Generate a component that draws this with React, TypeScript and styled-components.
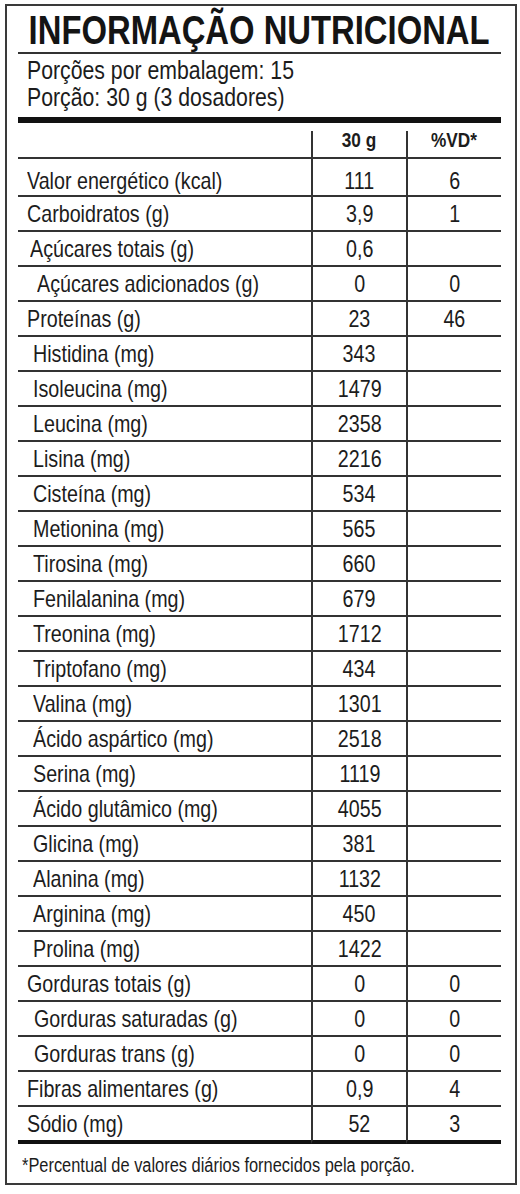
import styled, { createGlobalStyle } from 'styled-components';

const Global = createGlobalStyle`
  html, body { margin: 0; padding: 0; background: #fff; }
  body { font-family: "Liberation Sans", Arial, sans-serif; color: #1c1c1c; }
`;

type Row = { label: string; qty: string; vd?: string; indent?: number };

const rows: Row[] = [
  { label: 'Valor energético (kcal)', qty: '111', vd: '6' },
  { label: 'Carboidratos (g)', qty: '3,9', vd: '1' },
  { label: 'Açúcares totais (g)', qty: '0,6', indent: 3 },
  { label: 'Açúcares adicionados (g)', qty: '0', vd: '0', indent: 10 },
  { label: 'Proteínas (g)', qty: '23', vd: '46' },
  { label: 'Histidina (mg)', qty: '343', indent: 6 },
  { label: 'Isoleucina (mg)', qty: '1479', indent: 6 },
  { label: 'Leucina (mg)', qty: '2358', indent: 6 },
  { label: 'Lisina (mg)', qty: '2216', indent: 6 },
  { label: 'Cisteína (mg)', qty: '534', indent: 6 },
  { label: 'Metionina (mg)', qty: '565', indent: 6 },
  { label: 'Tirosina (mg)', qty: '660', indent: 6 },
  { label: 'Fenilalanina (mg)', qty: '679', indent: 6 },
  { label: 'Treonina (mg)', qty: '1712', indent: 6 },
  { label: 'Triptofano (mg)', qty: '434', indent: 6 },
  { label: 'Valina (mg)', qty: '1301', indent: 6 },
  { label: 'Ácido aspártico (mg)', qty: '2518', indent: 6 },
  { label: 'Serina (mg)', qty: '1119', indent: 6 },
  { label: 'Ácido glutâmico (mg)', qty: '4055', indent: 6 },
  { label: 'Glicina (mg)', qty: '381', indent: 6 },
  { label: 'Alanina (mg)', qty: '1132', indent: 6 },
  { label: 'Arginina (mg)', qty: '450', indent: 6 },
  { label: 'Prolina (mg)', qty: '1422', indent: 6 },
  { label: 'Gorduras totais (g)', qty: '0', vd: '0' },
  { label: 'Gorduras saturadas (g)', qty: '0', vd: '0', indent: 7 },
  { label: 'Gorduras trans (g)', qty: '0', vd: '0', indent: 7 },
  { label: 'Fibras alimentares (g)', qty: '0,9', vd: '4' },
  { label: 'Sódio (mg)', qty: '52', vd: '3' },
];

// texto condensado (tipo Arial Narrow) – sem fonte narrow instalada
const Narrow = styled.span<{ $origin?: 'left' | 'center'; $scale?: number }>`
  display: inline-block;
  white-space: nowrap;
  transform: scaleX(${(p) => p.$scale ?? 0.82});
  transform-origin: ${(p) => p.$origin ?? 'left'} center;
`;

// moldura externa
const Frame = styled.div`
  width: 512px;
  box-sizing: border-box;
  margin: 4px 0 0 5px;
  border: 2px solid #3a3a3a;
  padding: 0 14px 0 11px;
`;

const Title = styled.h1`
  display: flex;
  justify-content: center;
  margin: 0;
  padding-top: 2px;
  font-size: 40px;
  line-height: 44px;
  font-weight: 700;
  white-space: nowrap;
  color: #141414;
  border-bottom: 2px solid #333;
`;

const Serving = styled.div`
  display: flex;
  flex-direction: column;
  padding: 3px 0 6px 9px;
  font-size: 25px;
  border-bottom: 6px solid #111;
`;

const Line = styled.div`
  height: 27px;
  line-height: 27px;
  white-space: nowrap;
`;

const Table = styled.div`
  display: grid;
  grid-template-columns: 1fr 95px 95px;
  margin-top: 8px;
`;

const HeadCell = styled.div<{ $col?: boolean }>`
  height: 26px;
  font-size: 21px;
  line-height: 18px;
  font-weight: 700;
  text-align: center;
  border-bottom: 2px solid #333;
  border-left: ${(p) => (p.$col ? '2px solid #333' : 'none')};
`;

const Cell = styled.div<{ $first?: boolean; $last?: boolean; $col?: boolean; $indent?: number }>`
  box-sizing: border-box;
  height: ${(p) => (p.$first ? 38 : p.$last ? 37 : 35)}px;
  padding-top: ${(p) => (p.$first ? 7 : 2)}px;
  padding-left: ${(p) => (p.$col ? 0 : 9 + (p.$indent ?? 0))}px;
  font-size: 24px;
  line-height: 30px;
  text-align: ${(p) => (p.$col ? 'center' : 'left')};
  white-space: nowrap;
  border-bottom: ${(p) => (p.$last ? '4px solid #111' : '2px solid #333')};
  border-left: ${(p) => (p.$col ? '2px solid #333' : 'none')};
`;

const Footnote = styled.div`
  padding: 9px 0 6px 4px;
  font-size: 20px;
  line-height: 24px;
`;

export default function App() {
  return (
    <>
      <Global />
      <Frame>
        <Title>
          <Narrow $origin="center">INFORMAÇÃO NUTRICIONAL</Narrow>
        </Title>
        <Serving>
          <Line><Narrow $scale={0.85}>Porções por embalagem: 15</Narrow></Line>
          <Line><Narrow $scale={0.85}>Porção: 30 g (3 dosadores)</Narrow></Line>
        </Serving>
        <Table>
          <HeadCell />
          <HeadCell $col><Narrow $origin="center">30 g</Narrow></HeadCell>
          <HeadCell $col><Narrow $origin="center">%VD*</Narrow></HeadCell>
          {rows.map((r, i) => {
            const first = i === 0;
            const last = i === rows.length - 1;
            return [
              <Cell key={`l${i}`} $first={first} $last={last} $indent={r.indent}>
                <Narrow>{r.label}</Narrow>
              </Cell>,
              <Cell key={`q${i}`} $first={first} $last={last} $col>
                <Narrow $origin="center">{r.qty}</Narrow>
              </Cell>,
              <Cell key={`v${i}`} $first={first} $last={last} $col>
                <Narrow $origin="center">{r.vd ?? ''}</Narrow>
              </Cell>,
            ];
          })}
        </Table>
        <Footnote>
          <Narrow>*Percentual de valores diários fornecidos pela porção.</Narrow>
        </Footnote>
      </Frame>
    </>
  );
}
